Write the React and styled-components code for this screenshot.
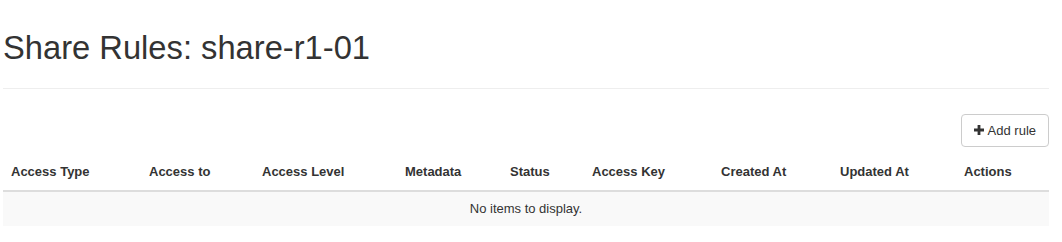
import React from 'react';
import styled, { createGlobalStyle } from 'styled-components';

const GlobalStyle = createGlobalStyle`
  body {
    margin: 0;
    background: #fff;
    font-family: "Liberation Sans", Arial, sans-serif;
    font-size: 13px;
    color: #333;
  }
`;

const Page = styled.div`
  padding: 0 13px 0 3px;
`;

const Header = styled.div`
  padding-top: 30px;
  border-bottom: 1px solid #eee;
  padding-bottom: 22px;
`;

const Title = styled.h1`
  margin: 0;
  font-size: 32.7px;
  font-weight: 400;
  line-height: 1.1;
  color: #333;
`;

const Actions = styled.div`
  display: flex;
  justify-content: flex-end;
  margin-top: 25px;
  margin-bottom: 6px;
`;

const Button = styled.button`
  display: inline-flex;
  align-items: center;
  gap: 4px;
  height: 33px;
  padding: 0 12px;
  font-family: inherit;
  font-size: 13px;
  color: #333;
  background: #fff;
  border: 1px solid #ccc;
  border-radius: 4px;
  cursor: pointer;
`;

const Table = styled.table`
  width: 100%;
  border-collapse: collapse;
  table-layout: fixed;
`;

const Th = styled.th`
  text-align: left;
  font-weight: 700;
  padding: 9px 8px 8px;
  height: 20px;
  border-bottom: 2px solid #ddd;
  white-space: nowrap;
`;

const EmptyCell = styled.td`
  text-align: center;
  background: #f9f9f9;
  padding: 8px;
  height: 18px;
`;

const columns = [
  ['Access Type', 138],
  ['Access to', 113],
  ['Access Level', 143],
  ['Metadata', 105],
  ['Status', 82],
  ['Access Key', 129],
  ['Created At', 119],
  ['Updated At', 124],
  ['Actions', 93],
];

const PlusIcon = () => (
  <svg width="10" height="10" viewBox="0 0 10 10" aria-hidden="true">
    <path d="M3.6 0h2.8v3.6H10v2.8H6.4V10H3.6V6.4H0V3.6h3.6z" fill="#333" />
  </svg>
);

const App = () => (
  <Page>
    <GlobalStyle />
    <Header>
      <Title>Share Rules: share-r1-01</Title>
    </Header>
    <Actions>
      <Button>
        <PlusIcon />
        Add rule
      </Button>
    </Actions>
    <Table>
      <colgroup>
        {columns.map(([name, w]) => (
          <col key={name} style={{ width: w }} />
        ))}
      </colgroup>
      <thead>
        <tr>
          {columns.map(([name]) => (
            <Th key={name}>{name}</Th>
          ))}
        </tr>
      </thead>
      <tbody>
        <tr>
          <EmptyCell colSpan={columns.length}>No items to display.</EmptyCell>
        </tr>
      </tbody>
    </Table>
  </Page>
);

export default App;
